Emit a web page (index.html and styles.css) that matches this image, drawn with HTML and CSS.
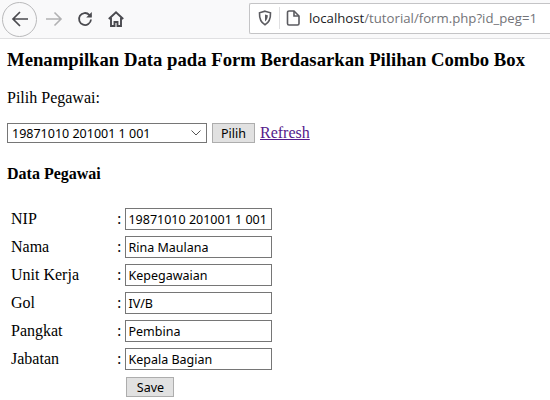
FILE: index.html
```html
<!DOCTYPE html>
<html lang="en">
<head>
  <meta charset="UTF-8">
  <title>Data Pegawai</title>
  <link rel="stylesheet" href="styles.css">
</head>
<body>

<div class="toolbar">
  <div class="nav-btn back">
    <svg width="20" height="20" viewBox="0 0 20 20" fill="none" stroke="#4a4a4f" stroke-width="1.7"><path d="M18 10H3M10 3l-7 7 7 7"/></svg>
  </div>
  <div class="nav-btn forward">
    <svg width="18" height="18" viewBox="0 0 18 18" fill="none" stroke="#b1b1b3" stroke-width="1.6"><path d="M1 9h15M9.500 2.500L16 9l-6.500 6.500"/></svg>
  </div>
  <div class="nav-btn reload">
    <svg width="16" height="16" viewBox="0 0 16 16" fill="none" stroke="#4a4a4f" stroke-width="1.8"><path d="M14 8.500a6 6 0 1 1-1.700-4.700L14 5.500"/><path d="M14.800 1v5.600H9.200" fill="#4a4a4f" stroke="none"/></svg>
  </div>
  <div class="nav-btn home">
    <svg width="16" height="16" viewBox="0 0 16 16" fill="none" stroke="#4a4a4f" stroke-width="1.900"><path d="M.800 8L8 1.300 15.200 8"/><path d="M3 6.500V15h3.500v-4h3v4H13V6.500"/></svg>
  </div>
  <div class="address">
    <svg class="shield" width="14" height="16" viewBox="0 0 14 16" fill="none" stroke="#5b5b60" stroke-width="1.600"><path d="M7 1.200l5.500 1.600c.2 5.500-1.200 9.700-5.500 12-4.300-2.300-5.700-6.500-5.500-12z"/><path d="M7 4.500l2.800.8C9.800 8 9 10 7 11.500z" fill="#5b5b60" stroke="none"/></svg>
    <span class="sep"></span>
    <svg class="page-icon" width="14" height="16" viewBox="0 0 14 16" fill="none" stroke="#5b5b60" stroke-width="1.600"><path d="M3 1h5l5 5v7.500a1.500 1.500 0 0 1-1.500 1.500h-8.500a1.500 1.500 0 0 1-1.500-1.500v-11a1.500 1.500 0 0 1 1.500-1.500z"/><path d="M8 1v5h5"/></svg>
    <span class="url">localhost<span class="url-path">/tutorial/form.php?id_peg=1</span></span>
  </div>
</div>

<div class="content">
  <h3>Menampilkan Data pada Form Berdasarkan Pilihan Combo Box</h3>
  <p class="pick-label">Pilih Pegawai:</p>

  <form class="pick-form">
    <div class="combo">
      <span>19871010 201001 1 001</span>
      <svg width="10" height="6" viewBox="0 0 10 6" fill="none" stroke="#555" stroke-width="1"><path d="M.5.500L5 5l4.500-4.500"/></svg>
    </div>
    <input type="button" class="btn" value="Pilih">
    <a href="#" class="refresh">Refresh</a>
  </form>

  <h4>Data Pegawai</h4>

  <table class="data-table">
    <tr><td class="lbl">NIP</td><td class="colon">:</td><td><input type="text" value="19871010 201001 1 001"></td></tr>
    <tr><td class="lbl">Nama</td><td class="colon">:</td><td><input type="text" value="Rina Maulana"></td></tr>
    <tr><td class="lbl">Unit Kerja</td><td class="colon">:</td><td><input type="text" value="Kepegawaian"></td></tr>
    <tr><td class="lbl">Gol</td><td class="colon">:</td><td><input type="text" value="IV/B"></td></tr>
    <tr><td class="lbl">Pangkat</td><td class="colon">:</td><td><input type="text" value="Pembina"></td></tr>
    <tr><td class="lbl">Jabatan</td><td class="colon">:</td><td><input type="text" value="Kepala Bagian"></td></tr>
    <tr><td></td><td></td><td><input type="button" class="btn save" value="Save"></td></tr>
  </table>
</div>

</body>
</html>
```

FILE: styles.css
```css
html, body {
  margin: 0;
  padding: 0;
  overflow: hidden;
  height: 100%;
  background: #fff;
  font-family: "Liberation Serif", serif;
  font-size: 16px;
  color: #000;
}
.toolbar {
  display: flex;
  align-items: center;
  height: 38px;
  background: #f9f9fa;
  border-bottom: 1px solid #e0e0e2;
}
.nav-btn {
  display: flex;
  align-items: center;
  justify-content: center;
}
.back {
  width: 33px;
  height: 33px;
  margin-left: 2px;
  border: 1px solid #b9b9bb;
  border-radius: 50%;
}
.forward {
  width: 18px;
  margin-left: 8px;
}
.reload {
  width: 16px;
  margin-left: 14px;
}
.home {
  width: 16px;
  margin-left: 15px;
}
.address {
  display: flex;
  align-items: center;
  flex: 1;
  height: 29px;
  margin: 0 0 2px 125px;
  background: #fff;
  border: 1px solid #c4c4c6;
  border-right: 0;
  border-radius: 2px 0 0 2px;
  padding-left: 8px;
}
.sep {
  width: 1px;
  height: 22px;
  background: #e0e0e2;
  margin: 0 6px 0 7px;
}
.url {
  margin-left: 9px;
  font-family: "Open Sans", sans-serif;
  font-size: 13.200px;
  color: #1c1c1e;
  white-space: nowrap;
}
.url-path {
  color: #737378;
}
.content {
  padding: 0 7px;
}
h3 {
  font-size: 18.720px;
  margin: 10px 0 0;
  line-height: 21px;
}
.pick-label {
  margin: 19px 0 0;
  line-height: 18px;
}
.pick-form {
  display: flex;
  align-items: center;
  margin-top: 16px;
  height: 20px;
}
.combo {
  display: flex;
  align-items: center;
  justify-content: space-between;
  box-sizing: border-box;
  width: 200px;
  height: 20px;
  font-family: "Noto Sans", sans-serif;
  font-size: 12.500px;
  background: #fff;
  border: 1px solid #767676;
  padding: 0 5px 0 4px;
}
.btn {
  font-family: "Noto Sans", sans-serif;
  font-size: 12.500px;
  background: #e1e1e1;
  border: 1px solid #adadad;
  color: #000;
  padding: 0;
  width: 43px;
  height: 20px;
  margin-left: 5px;
}
.refresh {
  margin-left: 5px;
  color: #551a8b;
}
h4 {
  font-size: 16px;
  margin: 22px 0 0;
  line-height: 18px;
}
.data-table {
  border-spacing: 2px;
  margin-top: 21px;
}
.data-table td {
  padding: 1px;
  height: 24px;
}
.data-table .lbl {
  width: 102px;
  padding-left: 2px;
}
.colon {
  width: 3px;
  padding-right: 0;
}
.data-table input[type=text] {
  display: block;
  box-sizing: border-box;
  width: 147px;
  height: 22px;
  font-family: "Noto Sans", sans-serif;
  font-size: 12.500px;
  border: 1px solid #767676;
  padding: 0 2px;
  color: #000;
}
.data-table .save {
  display: block;
  width: 48px;
  height: 20px;
  margin-left: 1px;
}
```
